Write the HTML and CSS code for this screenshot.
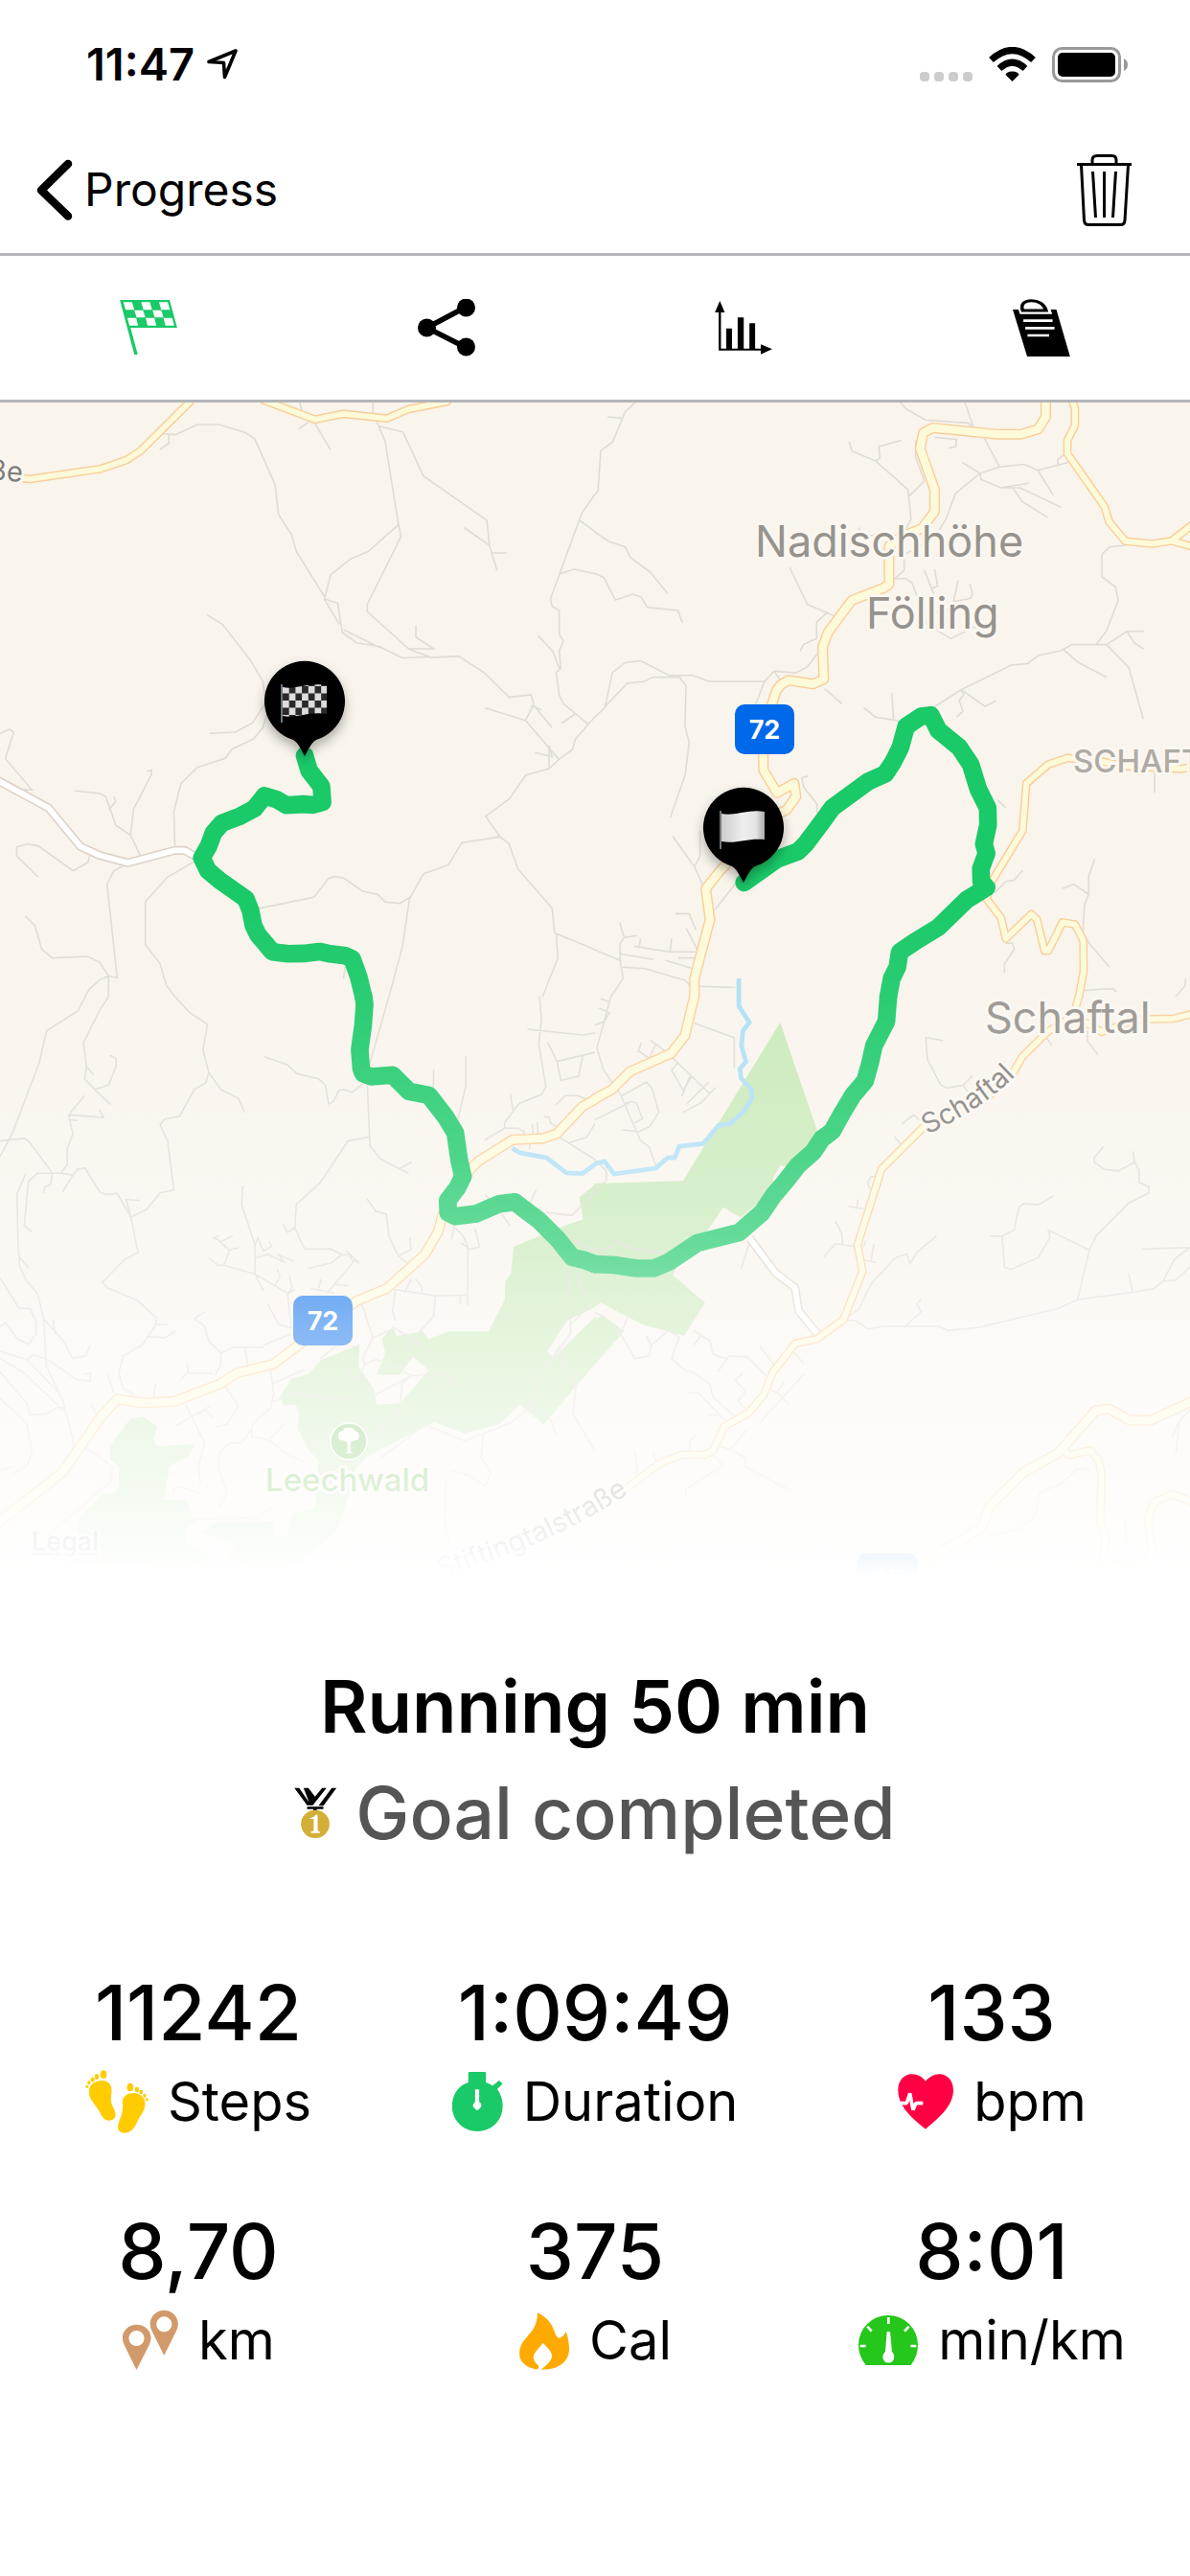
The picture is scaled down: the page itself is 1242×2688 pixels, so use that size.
FILE: index.html
```html
<!DOCTYPE html>
<html lang="en">
<head>
<meta charset="utf-8">
<meta name="viewport" content="width=device-width, initial-scale=1">
<title>Running 50 min</title>
<link rel="stylesheet" href="styles.css">
</head>
<body>
<header>
  <div class="status">
    <div class="status-side">
      <span class="time">11:47</span>
      <svg class="i-loc" viewBox="218 51 34 34" aria-hidden="true"><path d="M221 65.500 L249 54 L237.500 81.500 L236.500 66.500 Z" fill="none" stroke="#000" stroke-width="3.600" stroke-linejoin="round"/></svg>
    </div>
    <div class="status-side right">
      <svg class="i-dots" viewBox="960 49 55 37" aria-hidden="true"><g fill="#ccc"><rect x="960" y="75" width="10" height="10" rx="4"/><rect x="975" y="75" width="10" height="10" rx="4"/><rect x="990" y="75" width="10" height="10" rx="4"/><rect x="1005" y="75" width="10" height="10" rx="4"/></g></svg>
      <svg class="i-wifi" viewBox="1032 49 49 37" aria-hidden="true"><path d="M1056.500 85 L1049.500 78 Q1050.500 74.500 1056.500 74.500 Q1062.500 74.500 1063.500 78 Z"/><path d="M1043 71.500 Q1056.500 59 1070 71.500 M1034.500 62.500 Q1056.500 42.500 1078.500 62.500" fill="none" stroke="#000" stroke-width="7"/></svg>
      <svg class="i-batt" viewBox="1098 49 80 37" aria-hidden="true"><rect x="1099.500" y="50.500" width="69" height="34" rx="9" fill="none" stroke="#999" stroke-width="3"/><rect x="1104" y="55" width="60" height="25" rx="5"/><path d="M1173 61 Q1177 63 1177 67.500 Q1177 72 1173 74 Z" fill="#999"/></svg>
    </div>
  </div>
  <nav class="navbar">
    <a class="back" href="#progress">
      <svg class="i-back" viewBox="38 166 38 64" aria-hidden="true"><path d="M71 171 L43 198.500 L71 225.500" fill="none" stroke="#000" stroke-width="8.500" stroke-linecap="round" stroke-linejoin="round"/></svg>
      <span>Progress</span>
    </a>
    <button class="icon-btn" type="button" aria-label="Delete">
      <svg class="i-trash" viewBox="1125 159 58 77" aria-hidden="true"><g fill="none" stroke="#000" stroke-width="3"><path d="M1125 170.500 H1182"/><path d="M1141 170 V166 Q1141 161.500 1146 161.500 H1161.500 Q1166 161.500 1166 166 V170"/><path d="M1129.500 171 L1132.500 229 Q1133 233.500 1137 233.500 H1170.500 Q1174.500 233.500 1175 229 L1178.500 171"/><path d="M1141.500 178 L1144.500 226 M1153.500 178 V226 M1165.500 178 L1162.500 226"/></g></svg>
    </button>
  </nav>
  <div class="tabs">
    <button class="icon-btn" type="button" aria-label="Summary" aria-current="page">
      <svg class="i-tab" viewBox="125 312 60 60" aria-hidden="true"><g transform="scale(.396 .3333)"><path fill="#1AC968" d="M316 939 H447 L467 1026 H344 L363 1110 H354 Z"/><path fill="#fff" d="M325 946h23l6 24h-23z M372 946h23l6 24h-23z M419 946h23l6 24h-23z M354 971h23l6 23h-23z M402 971h23l6 23h-23z M336 995h23l5 24h-23z M384 995h23l5 24h-23z M431 995h23l5 24h-23z"/></g></svg>
    </button>
    <button class="icon-btn" type="button" aria-label="Share">
      <svg class="i-tab" viewBox="436 312 60 60" aria-hidden="true"><path d="M486 320.500 L445.500 342 L486 362.500" fill="none" stroke="#000" stroke-width="5.500"/><circle cx="445.500" cy="342" r="9.500"/><circle cx="486.500" cy="321" r="9.500"/><circle cx="486.500" cy="362" r="9.500"/></svg>
    </button>
    <button class="icon-btn" type="button" aria-label="Charts">
      <svg class="i-tab" viewBox="746 312 60 60" aria-hidden="true"><g transform="translate(621 0) scale(.396 .3333)"><path d="M326 975h6v116h14v-63h15v63h15v-97h16v97h15v-79h15v79h15v-13l30 15l-30 16v-12H326z M329 942l13 36h-26z"/></g></svg>
    </button>
    <button class="icon-btn" type="button" aria-label="Notes">
      <svg class="i-tab" viewBox="1057 312 60 60" aria-hidden="true"><g transform="translate(621 0) scale(.396 .3333)"><path d="M1101 969h15l4 14h85l-4-14h15l36 147h-113z"/><path d="M1127 972 C1121 950 1134 941 1150 941 C1168 941 1184 952 1189 972 Z" fill="#fff" stroke="#000" stroke-width="9"/><path stroke="#fff" stroke-width="8" d="M1129 1004h77M1134 1027h77M1140 1050h57"/></g></svg>
    </button>
  </div>
</header>

<main>
<svg class="map" viewBox="0 0 1242 1224" role="img" aria-label="Map of the running route">
  <defs>
    <linearGradient id="fade" x1="0" y1="520" x2="0" y2="1224" gradientUnits="userSpaceOnUse">
      <stop offset="0" stop-color="#fff" stop-opacity="0"/>
      <stop offset=".14" stop-color="#fff" stop-opacity=".07"/>
      <stop offset=".37" stop-color="#fff" stop-opacity=".22"/>
      <stop offset=".51" stop-color="#fff" stop-opacity=".34"/>
      <stop offset=".62" stop-color="#fff" stop-opacity=".5"/>
      <stop offset=".73" stop-color="#fff" stop-opacity=".64"/>
      <stop offset=".86" stop-color="#fff" stop-opacity=".78"/>
      <stop offset=".95" stop-color="#fff" stop-opacity=".91"/>
      <stop offset="1" stop-color="#fff"/>
    </linearGradient>
    <linearGradient id="cloth" x1="0" x2="1" y1="0" y2="0"><stop offset="0" stop-color="#ccc"/><stop offset=".5" stop-color="#eee"/><stop offset=".8" stop-color="#e4e4e4"/><stop offset="1" stop-color="#aaa"/></linearGradient>
    <pattern id="checks" width="13.400" height="15" patternUnits="userSpaceOnUse" x="295" y="297"><rect width="14" height="15" fill="#2a2a2a"/><path fill="#ddd" d="M0 0h6.700v7.500H0z M6.700 7.500h6.700V15H6.700z"/></pattern>
    <filter id="shadow" x="-40%" y="-40%" width="180%" height="180%"><feDropShadow dx="0" dy="6" stdDeviation="6" flood-color="#000" flood-opacity=".3"/></filter>

    <!-- the drawing is kept in four tiles that share one unit -->
    <g id="roads">
      <g transform="scale(.396 .3954)">
        <path d="M60 200 L80 202 L265 175 L333 152 L370 128 L505 -6 M690 -8 L830 45 L905 30 L1020 42 L1075 18 L1178 -2 V-10"/>
      </g>
      <g transform="translate(621 0) scale(.396 .3954)">
        <path class="wide" d="M1188 -8 V38 L1168 70 L1122 84 H1060 L890 67 L865 80 L857 122 L895 230 V288 L862 332 L805 355 L775 380 V480 L760 490 L677 522 L615 605 L600 645 L603 730 L575 743 L510 733 L490 745 L478 760 L465 800 L443 900 L444 970 L480 1030 L525 1005 L530 1040 L505 1075 L470 1092 L330 1235 L292 1283 L303 1365 L262 1520 V1572"/>
        <path d="M1255 -12 L1265 15 V60 L1245 100 V135 L1343 275 L1355 315 L1398 366 L1470 373 L1520 365 L1580 318 M1520 365 L1580 382 M1580 960 L1545 967 L1400 960 L1340 948 L1245 938 L1195 955 L1137 1005 L1127 1130 L1045 1265 L1032 1310 L1070 1360 L1083 1415 L1150 1350 L1165 1365 L1185 1447 H1195 L1232 1372 L1265 1377 L1287 1420 L1288 1500 L1275 1572"/>
      </g>
      <g transform="translate(0 620) scale(.396 .3954)">
        <path class="wide" d="M1572 269 L1535 290 L1467 362 L1430 374 L1350 378 L1260 435 L1240 455 L1165 580 L1155 620 L1120 680 L1020 770 L940 803 L720 970 L625 993 L580 1022 L460 1068 L375 1072 L310 1062 L265 1110 L165 1255 L-8 1390"/>
      </g>
      <g transform="translate(621 620) scale(.396 .3954)">
        <path class="wide" d="M262 -2 L237 103 L200 150 L92 198 L45 245 L-3 271 M860 1498 L1020 1400 L1040 1345 L1130 1255 L1220 1205 L1320 1092 L1355 1088 L1410 1118 H1465 L1580 1065"/>
        <path d="M1275 -2 L1262 50 L1190 95 L1125 160 L1100 205 L1030 270 L865 345 L755 455 L692 655 L705 725 L655 852 L585 903 L528 915 L468 992 L445 1050 L405 1098 L340 1135 L312 1197 L290 1209 H228 L168 1233 L20 1345 M1262 50 L1335 93 L1430 60 L1525 58 L1580 44 M1235 1195 L1250 1210 L1305 1197 L1328 1225 L1335 1260 L1332 1385 L1345 1420 L1343 1490 L1400 1510 L1462 1490 L1468 1460 L1457 1380 L1472 1335 L1520 1313 L1580 1335"/>
      </g>
    </g>
    <g id="lanes">
      <g transform="scale(.396 .3954)"><path d="M-8 996 L128 1070 L212 1172 L262 1195 L337 1215 L460 1182 H487 L530 1207"/></g>
      <g transform="translate(621 620) scale(.396 .3954)"><path d="M408 638 L475 728 L527 768 L537 830 L590 895"/></g>
    </g>
    <path id="p-schaftal" d="M968 764 C1008 744 1038 727 1070 692"/>
    <path id="p-stifting" d="M460 1227 C530 1204 600 1180 680 1122"/>
  </defs>

  <rect width="1242" height="1224" fill="#F9F4EC"/>

  <g class="park">
    <g transform="translate(0 620) scale(.396 .3954)">
      <path d="M1570 494 L1527 530 L1537 588 L1500 600 L1353 660 L1347 730 L1332 752 L1330 800 L1288 883 H1183 L1130 904 L1115 884 L1045 895 L1036 870 L1007 903 L1015 940 L993 998 H1053 L1088 950 L1130 986 L1055 1073 L993 1077 L985 1035 L945 975 L948 917 L845 960 L812 997 L768 1007 L737 1057 L748 1078 H780 L788 1095 L785 1140 L812 1195 L838 1222 V1260 L830 1350 L772 1365 L755 1425 H720 V1385 L560 1390 L535 1415 L620 1450 L590 1500 L490 1440 L485 1410 L515 1385 L490 1330 L432 1328 L447 1240 L500 1210 L512 1182 L413 1186 L405 1168 L415 1135 L375 1108 L343 1115 L305 1165 L290 1190 L292 1222 L312 1240 L314 1290 L305 1308 L270 1312 L213 1370 L180 1500 L760 1520 L885 1413 L920 1315 L935 1250 L965 1215 L1145 1122 L1225 1153 L1318 1128 L1370 1075 L1432 1130 L1570 968 V870 L1460 952 L1442 935 L1495 855 L1570 818 Z"/>
      <path d="M1460 952 L1570 843 V900 Z"/>
    </g>
    <g transform="translate(621 620) scale(.396 .3954)">
      <path d="M-2 493 L232 486 L488 68 L587 358 L520 450 L488 446 L468 482 L480 500 L385 583 L338 556 L300 612 L215 715 L205 735 L290 808 L235 895 L125 865 L15 808 L-2 818 Z M-2 853 L20 840 L77 883 L-2 972 Z"/>
    </g>
  </g>

  <g class="paths">
    <g transform="scale(.396 .3954)"><path d="M425 82 L462 85 L520 58 H578 L648 80 L672 97 L725 217 L734 295 L769 350 L781 393 L860 520 L890 530 L902 607 L940 634 L998 643 L1060 674 L1132 671 L1078 651 L968 552 V533 L1057 354 L1050 320 L1015 103 L993 50 M445 84 V108 L421 124 M830 55 L871 125 M787 70 L815 50 M790 0 L795 22 M983 0 V35 M998 62 L1062 78 L1116 194 L1283 311 L1290 377 L1223 330 M1290 377 L1310 444 M1295 397 H1336 M1050 323 L971 393 L925 412 L871 455 L855 520 L895 586 M905 599 L1000 647 M1096 588 V619 L1143 650 H1078 M1132 673 L1209 670 L1276 713 L1342 778 L1399 771 L1407 797 L1385 839 L1473 942 L1447 966 L1386 983 L1342 1046 L1280 1092 L1318 1146 L1342 1165 L1365 1231 L1455 1334 L1462 1400 L1570 1445 M1466 1400 L1470 1467 L1430 1568 M1318 1146 L1217 1162 L1182 1220 L1116 1244 L1082 1305 L1054 1322 L1015 1318 L995 1298 L956 1290 L906 1255 L882 1251 L866 1256 L827 1306 L683 1335 M1080 1305 L1061 1435 L1025 1568 M1278 806 L1385 839 M1407 800 L1455 858 M1400 800 L1428 811 M1410 924 L1455 935 L1447 905 V966 M1568 242 L1533 293 L1475 452 L1451 518 L1455 538 L1474 549 V611 L1485 630 L1474 655 L1478 702 L1466 713 L1474 772 L1485 795 L1550 849 L1568 830 M1418 615 L1458 658 L1474 702 M1527 311 L1570 342 M1475 452 L1513 440 L1570 452 M1516 822 L1481 846 M1550 850 L1516 889 L1509 916 L1473 942 M545 560 L586 585 L660 680 L692 734 L702 790 L665 846 L620 870 L553 873 M705 820 L692 860 L668 888 L610 916 L594 939 L520 963 L477 1006 L458 1080 L461 1170 M0 874 L25 862 L36 870 L14 940 L84 1022 H50 M387 974 L399 970 V982 L352 1073 L344 1142 L370 1196 M198 1025 L264 1032 L279 1041 L305 1115 L344 1142 M287 1074 L305 1053 L300 1040 M100 1252 L44 1197 V1173 L73 1165 L100 1170 L193 1236 L232 1213 L236 1197 M325 1223 L300 1236 L282 1271 L309 1518 L286 1513 L262 1477 L231 1462 L138 1466 L110 1443 L92 1380 L67 1356 M286 1513 L262 1524 L236 1548 L224 1568 M286 1513 V1568 M510 1213 L442 1252 L383 1317 V1431 L422 1481 L438 1537 L461 1568 M910 1490 L905 1521"/></g>
    <g transform="translate(621 0) scale(.396 .3954)"><path d="M106 0 L80 24 L47 103 L15 128 L8 233 L0 243 M33 38 L75 42 M0 342 L35 366 L79 381 L95 411 L145 447 L191 503 M0 451 L23 462 L54 521 L100 506 L121 513 L139 541 L219 549 L230 581 M805 0 L820 17 L871 46 L983 54 L997 64 L975 0 M670 103 L677 128 L739 154 L751 147 L748 116 L807 100 M739 154 L825 230 L833 308 L810 350 M828 247 L868 207 L845 144 V100 M895 92 L952 97 V116 L933 120 M1025 92 L1066 170 L1132 163 L1167 179 L1248 158 M1066 170 L1015 187 L968 158 M1015 187 L950 240 L927 303 L895 358 L818 400 M1015 187 L1017 203 L1070 225 H1120 L1228 276 M1070 225 L1143 213 M1103 228 L1127 262 L1193 303 M1167 179 L1208 245 M1220 165 V150 L1235 138 M513 435 L560 533 L630 563 M613 553 L584 580 V623 L550 638 L541 656 M600 645 L560 697 L530 713 L472 709 L447 736 L423 797 M472 709 L490 735 M447 736 H300 L257 720 H195 L121 682 L80 686 L46 713 L26 805 L0 830 M26 803 L85 741 L131 736 L153 725 H223 L240 748 L237 853 L248 897 L238 982 L198 1096 M605 755 L651 795 M708 805 L739 830 L800 840 M782 766 L787 835 M895 803 L965 758 L1097 693 L1140 689 L1170 667 L1228 655 L1257 639 H1348 L1402 604 H1446 M1402 604 L1422 635 L1446 650 M1348 639 L1407 700 L1445 835 M1235 652 L1274 686 L1348 725 M965 758 L1028 802 L1057 787 M965 762 L972 770 L960 787 L970 815 L953 830 M1322 637 L1348 603 L1379 522 L1372 487 L1336 460 V401 L1356 381 L1398 377 M815 400 V443 L790 465 L818 464 L835 475 L850 515 L875 585 L938 623 L1000 592 L1040 620 M868 443 L895 510 M895 440 L903 485 L890 490 M957 470 L945 525 L990 517 L995 505 L988 478 M875 545 L905 553 L940 545 M695 330 L708 352 L745 350 M545 990 L562 986 M545 990 L550 1015 L585 1060 V1085 M1060 1048 L1083 1070 M1475 975 V1030 M205 1145 L262 1225 L285 1275 M277 1130 V1197 L262 1225 M370 1270 L315 1340 M1317 1205 L1301 1251 V1298 L1290 1325 L1286 1400 L1305 1430 L1356 1490 M1232 1283 L1262 1271 L1301 1298 M1127 1235 L1105 1260 L1083 1264 L1053 1295 M1083 1427 H1100 L1105 1443 L1079 1482 V1505 M65 1372 L77 1412 L66 1428 V1470 L74 1520 L42 1568 M77 1412 L110 1407 M103 1435 L197 1450 H265 M120 1415 L116 1440 M202 1414 L198 1450 M212 1349 H248 L266 1392 M240 1387 L270 1445 M220 1466 H270 M66 1455 L154 1470 M185 1472 L258 1494 M72 1490 L132 1494 L238 1525 L252 1540 L370 1544 M0 1445 L70 1474 M1290 1552 L1340 1548 L1365 1547 L1375 1556 M1557 1520 L1555 1540 L1530 1568"/></g>
    <g transform="translate(0 620) scale(.396 .3954)"><path d="M225 0 L205 38 L123 90 L103 175 L35 355 L0 422 M286 0 L263 35 L220 121 L228 185 L223 217 L250 245 L291 285 M228 185 L247 206 M250 245 L286 233 L306 184 V163 L290 155 M223 261 L181 312 L192 362 L177 403 V443 L160 466 H99 L75 487 L64 604 L85 621 M181 312 L273 319 L262 298 M181 325 L205 327 M0 381 L65 374 L76 382 L138 465 L134 495 L118 503 L114 519 M160 466 L192 471 L165 515 M192 471 L205 456 L224 452 L263 515 L278 522 L309 519 L345 582 L332 535 L369 538 M345 582 L387 561 L422 518 L458 510 L442 381 L422 338 L434 323 L473 316 L512 245 L543 227 L550 200 L535 140 L547 73 L500 42 L461 0 M550 200 L582 245 L629 269 L644 305 M345 582 L364 675 L329 693 L270 754 L282 768 L361 801 L411 847 V866 L374 920 L324 948 L313 994 L325 1035 L355 1050 M411 865 H442 M389 897 L435 900 L462 882 M68 467 L45 520 L47 640 L52 713 L70 750 L99 784 L115 850 L122 975 L165 1065 L192 1165 V1207 L165 1255 M52 688 L76 717 M0 742 L50 822 L79 824 L95 857 V890 L75 917 L46 904 L15 860 L0 870 M115 850 L168 910 L192 955 L225 948 L238 920 M140 853 L145 890 M0 935 L72 959 L88 944 M72 959 L160 1050 M86 944 L130 960 L200 1010 L238 1015 V994 L224 995 M0 955 L60 990 L170 1095 M0 990 L72 1075 L79 1103 H118 L148 1085 L173 1084 M0 1060 L70 1125 L85 1200 L70 1240 L30 1260 M697 159 L758 180 L782 203 L840 217 L858 234 L866 283 L879 277 L893 247 L905 245 L929 252 L960 227 L1025 0 M968 230 L975 393 L1002 428 L1077 467 M975 370 L917 381 L844 491 L781 548 L777 611 L803 666 H870 L905 682 L918 680 L932 700 L862 782 M1050 455 L1085 437 M745 599 L758 622 L777 609 M812 717 L872 703 L900 682 L868 663 M640 499 L637 549 L672 655 V732 L758 783 L768 875 M672 655 L680 638 L694 671 L715 660 L710 645 M672 690 L705 680 L748 700 L735 682 L774 698 M672 732 L695 776 M550 688 L575 709 H590 L672 732 M590 709 L605 670 L575 642 L562 637 L578 630 M605 668 L630 663 M582 647 L613 631 M705 810 L735 865 L770 875 M730 718 L738 740 L722 765 M762 737 L770 765 L760 783 L778 772 M818 770 L882 782 M847 745 L838 775 M882 760 L918 763 M932 695 L947 703 L912 670 M967 533 L990 566 L1018 574 L1026 635 L1050 685 L1073 703 M1050 685 L1083 667 L1080 635 M1228 158 V235 L1205 330 M1143 193 L1142 240 M1422 0 L1427 60 L1420 125 L1439 237 L1427 258 L1368 282 L1330 332 V347 L1278 378 M1330 347 H1365 L1381 355 V375 M1345 256 L1353 305 M1390 86 L1535 101 L1568 96 M1443 120 L1468 171 L1478 221 L1525 210 L1536 156 M1468 171 L1568 147 M1466 285 L1490 261 H1522 L1545 270 M1433 317 L1447 318 L1452 335 L1466 342 M1403 337 L1405 362 M1416 330 L1418 362 M1396 385 V403 M1473 370 L1568 430 M1500 385 L1547 371 L1568 335 M1278 522 L1310 555 L1345 605 M1413 510 L1395 548 M1440 570 L1508 577 L1568 515 M1197 605 L1190 640 M1200 610 L1220 630 L1233 660 V815 M1215 650 L1238 667 L1264 660 L1252 612 M1042 773 L1147 789 L1230 788 M1042 773 L1035 830 L1042 855 M1066 780 L1085 745 M1095 745 L1112 765 V785 M1147 789 L1143 843 L1108 882 L1066 937 M1213 790 V812 M953 810 L983 900 L955 955 L962 970 L992 957 L1085 1000 L1060 1018 L1053 1093 L970 1175 M983 900 L1040 875 L1143 940 M918 982 L938 1015 L962 970 M970 1030 L985 1053 L1085 1000 L1160 993 L1185 1005 L1193 1027 L1155 1037 M713 988 L722 1050 L712 1085 L664 1130 V1162 L710 1170 L747 1130 M720 1020 L803 984 M718 1070 L780 1047 L910 1064 M693 920 L768 890 M582 940 L617 925 H695 M512 850 L540 831 M512 850 L538 868 L550 908 L582 940 V972 L567 1000 M493 967 L497 994 H560 M495 990 L477 1010 M645 925 L653 970 M489 1075 L539 1178 L523 1240 L528 1285 M465 1131 L555 1080 M508 1105 L542 1092 L563 1112 M595 1030 L628 1080 L598 1130 L567 1135 M283 994 L300 1045 M240 1073 L258 1110 M410 1020 L405 1055 M845 955 L905 905 M195 1180 L240 1200 L297 1240 L290 1280 L130 1420 M0 1250 L40 1240 M710 1170 L756 1208 L800 1228 M575 1350 L598 1310 L577 1250 V1205 L605 1178 H635 L664 1140 M461 1313 Q450 1295 475 1295 L530 1310 M500 1380 L680 1375 L725 1340 M1500 715 L1504 887 L1460 952 M1475 920 L1480 968 L1518 1030 L1510 1100 L1568 1200 M1500 870 L1568 800 M1515 720 L1545 790 M1508 640 L1568 672 M1475 920 L1420 1010 L1390 1090 L1437 1097 L1455 1125 L1466 1158 M1120 1130 L1225 1172 L1345 1125 L1390 1090 M1120 1130 L1000 1220 M1275 1150 L1268 1215 L1293 1255 L1280 1293 L1240 1265 L1188 1250 M1175 1278 L1173 1400 L1190 1460"/></g>
    <g transform="translate(621 620) scale(.396 .3954)"><path d="M42 0 L5 135 L22 192 L68 260 L120 380 L143 397 L160 445 M15 5 L40 15 M0 75 L25 65 L38 42 L10 30 M262 70 L367 108 V189 M113 147 L122 122 M113 142 L143 163 L160 125 M146 115 L187 145 L255 210 L303 257 M218 175 L202 194 L233 248 L255 210 M229 262 L250 210 M317 240 L280 280 L232 305 M300 225 L243 282 M68 263 L136 225 L150 242 L168 305 L145 342 L115 357 L72 351 M80 282 Q108 270 113 290 L125 322 L105 333 M0 325 L90 280 M0 430 L30 460 V485 L0 515 M917 116 L872 108 L876 165 L910 231 L926 241 L970 234 L995 209 M970 234 L989 259 M1298 90 V117 L1325 153 M1190 108 L1204 129 M809 336 L840 312 L855 325 M790 370 L805 388 M740 475 H728 L718 490 L725 508 M668 553 L708 560 M693 535 L690 557 M603 687 L633 652 L690 660 M653 655 L650 625 L634 592 M710 694 L740 702 M735 653 L728 696 M713 645 L708 660 M410 640 L385 718 M655 852 L695 825 L728 758 L790 690 L822 679 L830 705 L848 675 L900 632 M668 854 H685 L720 877 L760 870 H905 L932 881 L1010 873 L1220 823 L1272 799 L1418 780 L1472 771 L1497 751 L1527 693 L1568 662 M1497 751 L1531 748 L1568 714 M1443 666 L1568 662 M1406 729 L1418 783 M1272 799 L1303 669 L1321 631 L1406 545 L1460 518 V502 L1434 490 V457 L1422 437 L1418 408 M1422 437 L1379 460 L1343 456 L1316 437 V425 L1340 396 M1042 632 H1073 L1105 616 L1117 557 L1129 546 L1168 549 L1208 526 M1073 632 L1079 713 L1095 720 L1168 689 L1199 635 L1195 616 L1303 669 M815 873 L860 831 L848 812 L860 798 M0 833 L20 843 L68 890 L105 955 L143 948 L148 920 L195 880 L222 900 L202 955 L233 983 L263 994 L303 1022 L311 1057 L367 1107 M68 890 L85 848 M135 895 L148 920 M260 881 L303 908 L311 944 L345 955 L358 948 L402 951 L450 1000 M280 893 L260 920 M350 955 L323 990 M435 923 L475 975 M525 940 L550 967 M390 993 L370 1013 L397 1042 L377 1068 L400 1090 M243 1045 H272 L345 1120 M300 1104 H325 M460 1035 L482 1047 L511 1077 M480 1042 L498 1018 M550 997 L435 1123 M355 1195 L400 1143 M325 1185 L355 1195 L398 1217 L393 1240 L510 1300 M300 1200 L338 1237 L240 1300 V1325 M105 1197 L113 1265 M250 1200 V1175 L265 1155 M153 1203 L160 1225 M0 668 L45 660 L62 645 L85 663 L185 677 M1568 1090 L1540 1120 L1531 1205 M1520 1165 L1540 1120 M1303 1247 H1270 L1230 1283 L1172 1310 L1160 1370 L1125 1402 L1040 1425 M1397 1375 L1400 1470"/></g>
  </g>

  <g class="water">
    <path transform="translate(621 0) scale(.396 .3954)" d="M379 1520 V1572"/>
    <path transform="translate(621 620) scale(.396 .3954)" d="M379 0 V25 L407 68 L390 90 L386 130 L398 172 L382 190 L385 215 L413 245 V270 L390 305 L357 335 L325 340 L285 388 L222 395 L210 425 H192 L160 453 L50 468 L25 435 L-2 441"/>
    <path transform="translate(0 620) scale(.396 .3954)" d="M1570 441 L1535 467 L1493 465 L1440 425 L1370 412 L1350 400"/>
  </g>

  <use href="#lanes" class="lane-edge"/><use href="#lanes" class="lane-fill"/>
  <use href="#roads" class="road-edge"/><use href="#roads" class="road-fill"/>

  <g class="route">
    <path transform="scale(.396 .3954)" d="M803 932 L815 972 L847 1013 L850 1055 L825 1062 L800 1060 L755 1063 L730 1048 L697 1038 L670 1072 L630 1093 L585 1110 L563 1135 L550 1170 L532 1202 L548 1235 L580 1262 L648 1310 L660 1340 L668 1380 L680 1405 L718 1450 L760 1455 L800 1454 L842 1449 L870 1455 L910 1460 L928 1468 L945 1515 L958 1568"/>
    <path transform="translate(0 620) scale(.396 .3954)" d="M958 0 L961 20 L957 75 L948 140 L952 190 L957 203 L978 211 L1035 207 L1078 250 L1130 260 L1175 318 L1200 360 L1210 430 L1220 475 L1205 505 L1180 538 L1181 570 L1200 580 L1255 573 L1315 547 L1357 542 L1380 560 L1420 590 L1470 640 L1508 688 L1540 695 L1568 706"/>
    <path transform="translate(621 620) scale(.396 .3954)" d="M0 706 L50 708 L110 717 H155 L195 700 L270 650 L330 635 L380 622 L440 570 L470 525 L500 490 L535 445 L575 410 L598 375 L625 355 L650 310 L680 260 L712 222 L725 175 L735 130 L768 65 L773 0"/>
    <path transform="translate(621 0) scale(.396 .3954)" d="M393 1267 L480 1205 L535 1185 L555 1165 L600 1105 L625 1070 L720 1000 L765 980 L785 950 L805 910 L820 855 L860 828 L885 825 L905 865 L960 910 L990 955 L1010 1020 L1035 1070 L1036 1115 L1025 1165 L1032 1190 L1017 1230 L1018 1265 L1032 1280 L980 1312 L905 1385 L840 1425 L803 1450 L797 1490 L782 1520 L773 1568"/>
  </g>

  <g class="label">
    <text class="place" x="788" y="161">Nadischhöhe</text>
    <text class="place" x="904" y="236">Fölling</text>
    <text class="place" x="1028" y="658">Schaftal</text>
    <text class="district" x="1120" y="386">SCHAFTAL</text>
    <text class="street" x="23" y="83" text-anchor="end" transform="rotate(5 23 83)">Straße</text>
    <text class="street"><textPath href="#p-schaftal">Schaftal</textPath></text>
    <text class="street"><textPath href="#p-stifting">Stiftingtalstraße</textPath></text>
    <text class="wood" x="277" y="1136">Leechwald</text>
    <text class="legal" x="33" y="1198">Legal</text>
  </g>

  <circle cx="364" cy="1084" r="19" fill="#7CC663" stroke="#fff" stroke-width="1.500"/>
  <path fill="#fff" d="M362.500 1085 L358 1083 Q352 1083 353 1077 Q354 1073 358 1073 Q359 1069 364 1070 Q369 1069 370 1073 Q375 1074 375 1078 Q375 1083 370 1083 L366 1085 V1095 L369 1096.500 H360 L362.500 1095 Z"/>

  <g class="badge">
    <rect x="767" y="315" width="62" height="52" rx="10"/><text x="798" y="351">72</text>
    <rect x="306" y="932" width="62" height="52" rx="10"/><text x="337" y="968">72</text>
    <rect x="894" y="1201" width="64" height="52" rx="10"/><text x="926" y="1237">65</text>
  </g>

  <rect y="520" width="1242" height="704" fill="url(#fade)"/>

  <g transform="translate(0 -1)">
    <g filter="url(#shadow)">
      <path d="M318 370 C314 363 312 357 306 353 A42 42 0 1 1 330 353 C324 357 322 363 318 370 Z"/>
      <path d="M776 502 C772 495 770 489 764 485 A42 42 0 1 1 788 485 C782 489 780 495 776 502 Z"/>
    </g>
    <path d="M294 295 V335" stroke="#667788" stroke-width="2"/>
    <path d="M295 298 C308 301 322 293 341 296 V326 C322 323 310 331 295 328 Z" fill="url(#checks)"/>
    <path d="M752 427 V467" stroke="#777" stroke-width="2"/>
    <path d="M753 430 C768 433 780 425 798 428 V457 C780 455 768 462 753 459 Z" fill="url(#cloth)"/>
  </g>
</svg>

<section class="headline">
  <h1>Running 50 min</h1>
  <p class="goal">
    <svg class="i-medal" viewBox="308 1864 44 54" aria-hidden="true"><g transform="translate(260 1700) scale(.4592 .3333)"><path d="M105 494h11l27 54h-9z M126 494h11l15 27l16-27h10l-31 54h-6z M190 494h11l-30 56h-11z"/><path d="M134 553h37v7h-15v4h-8v-4h-14z"/><ellipse cx="152.500" cy="607" rx="32.500" ry="44" fill="#D4AF37"/><path fill="#fff" d="M141 588 Q150 586 153 578 H158 V625 Q158 631 163 631 V635 H143 V631 Q149 631 149 625 V591 H141 Z"/></g></svg>
    <span>Goal completed</span>
  </p>
</section>

<dl class="stats">
  <div class="stat">
    <dd>11242</dd>
    <dt><svg class="i-steps" viewBox="91 2158 66 68" aria-hidden="true"><g transform="translate(60 2040) scale(.4719 .3333)" fill="#FFCC00"><path d="M74 425 C74 403 87 390 103 390 C119 390 125 406 124 425 C123 445 120 455 128 475 C135 497 135 513 119 515 C106 516 102 500 94 480 C85 460 74 448 74 425 Z"/><ellipse cx="106" cy="371" rx="7" ry="13"/><ellipse cx="91" cy="378" rx="4.500" ry="9"/><ellipse cx="82" cy="387" rx="4.500" ry="7.500"/><ellipse cx="74" cy="397" rx="3.500" ry="6"/><ellipse cx="69.500" cy="409" rx="3" ry="5"/><path d="M148 460 C147 440 158 429 172 429 C188 430 199 444 198 465 C197 487 188 497 181 518 C173 542 165 555 151 554 C138 552 135 538 140 520 C146 500 150 485 148 460 Z"/><ellipse cx="165" cy="411" rx="7" ry="13"/><ellipse cx="180" cy="418" rx="4.500" ry="8.500"/><ellipse cx="189" cy="426" rx="4" ry="7"/><ellipse cx="197" cy="437" rx="3.500" ry="6"/><ellipse cx="202" cy="449" rx="3" ry="5"/></g></svg>Steps</dt>
  </div>
  <div class="stat">
    <dd>1:09:49</dd>
    <dt><svg class="i-watch" viewBox="475 2158 54 68" aria-hidden="true"><g transform="translate(60 2040) scale(.4719 .3333)"><path fill="#1AC968" d="M915 366 Q915 363 918 363 H951 Q954 363 954 366 V396 Q962 400 969 406 L983 390 L991 400 L979 417 Q991 440 991 470 C991 515 966 549 935 549 C904 549 879 515 879 470 C879 435 893 405 915 396 Z"/><path fill="#fff" d="M930 418 H939 V457 Q944 461 944 469 Q944 474 940 477 Q938 483 934 483 Q931 483 930 478 Q925 474 925 469 Q926 461 930 457 Z"/></g></svg>Duration</dt>
  </div>
  <div class="stat">
    <dd>133</dd>
    <dt><svg class="i-heart" viewBox="938 2158 60 68" aria-hidden="true"><g transform="translate(800 2040) scale(.3333)"><path fill="#FF0044" d="M504 392 C515 380 530 370 547 370 C572 370 591 390 591 420 C591 465 555 500 504 542 C450 500 418 465 418 420 C418 390 437 370 461 370 C480 370 493 379 504 392 Z"/><path fill="none" stroke="#fff" stroke-width="11" stroke-linejoin="bevel" d="M424 461 H445 L455 430 L465 482 L474 461 H496"/></g></svg>bpm</dt>
  </div>
  <div class="stat">
    <dd>8,70</dd>
    <dt><svg class="i-pins" viewBox="129 2409 60 64" aria-hidden="true"><g transform="translate(60 2290) scale(.4719 .3333)" fill="#D29A6A" fill-rule="evenodd"><path d="M179 546 L152 468 Q148 457 148 445 C148 422 162 404 179 404 C197 404 211 422 211 445 Q211 457 207 468 Z M179 423 A17 24 0 1 0 179.100 423 Z"/><path d="M240 501 L213 424 Q209 413 209 402 C209 378 223 359 240 359 C257 359 271 378 271 402 Q271 413 267 424 Z M240 379 A17 24 0 1 0 240.100 379 Z"/></g></svg>km</dt>
  </div>
  <div class="stat">
    <dd>375</dd>
    <dt><svg class="i-fire" viewBox="544 2409 54 64" aria-hidden="true"><g transform="translate(60 2290) scale(.4719 .3333)"><path fill="#FFAA00" d="M1068 367 C1095 385 1102 410 1108 436 Q1113 449 1119 445 Q1128 438 1131 426 C1135 440 1138 460 1138 480 C1138 520 1115 546 1076 545 C1090 530 1100 515 1100 502 C1099 485 1089 476 1080 461 C1072 478 1059 490 1059 508 C1060 520 1066 528 1071 533 L1068 545 C1040 538 1028 518 1028 495 C1028 460 1046 445 1059 417 Q1068 395 1068 367 Z"/></g></svg>Cal</dt>
  </div>
  <div class="stat">
    <dd>8:01</dd>
    <dt><svg class="i-gauge" viewBox="899 2409 64 64" aria-hidden="true"><g transform="translate(800 2040) scale(.3333)"><path fill="#25C71A" d="M323 1281 Q300 1252 300 1218 A93 93 0 0 1 486 1218 Q486 1252 464 1281 Z"/><path stroke="#fff" stroke-width="8" d="M394 1131 V1152 M305 1221 H323 M463 1221 H481 M328 1160 L341 1175 M458 1160 L444 1175"/><path fill="#fff" d="M389 1176 H399 L405 1238 Q412 1246 412 1256 Q410 1274 394 1274 Q378 1274 376 1256 Q376 1246 384 1238 Z"/></g></svg>min/km</dt>
  </div>
</dl>
</main>
</body>
</html>
```
FILE: styles.css
```css
* { box-sizing: border-box; }

body {
  margin: 0;
  background: #fff;
  color: #000;
  font-family: Inter, "Liberation Sans", sans-serif;
}

svg { display: block; flex: none; }

.status {
  display: flex;
  justify-content: space-between;
  height: 134px;
  padding: 0 64px 0 90px;
}
.status-side { display: flex; align-items: center; gap: 12px; }
.status-side.right { gap: 17px; }
.time { font-size: 47px; font-weight: 600; line-height: 56px; }

.navbar {
  display: flex;
  align-items: center;
  justify-content: space-between;
  height: 133px;
  padding: 0 60px 2px 38px;
  border-bottom: 3px solid #b3b5b8;
}
.back {
  display: flex;
  align-items: center;
  gap: 12px;
  color: inherit;
  font-size: 48px;
  line-height: 60px;
  text-decoration: none;
}
.icon-btn {
  display: flex;
  align-items: center;
  justify-content: center;
  margin: 0;
  padding: 0;
  border: 0;
  background: none;
}
.tabs {
  display: grid;
  grid-template-columns: repeat(4, 1fr);
  height: 153px;
  border-bottom: 3px solid #b3b5b8;
}

.i-loc { width: 34px; height: 34px; }
.i-dots { width: 55px; height: 37px; }
.i-wifi { width: 49px; height: 37px; }
.i-batt { width: 80px; height: 37px; }
.i-back { width: 38px; height: 64px; }
.i-trash { width: 58px; height: 77px; }
.i-tab { width: 60px; height: 60px; }
.i-medal { width: 44px; height: 54px; }
.i-steps { width: 66px; height: 68px; }
.i-watch { width: 54px; height: 68px; }
.i-heart { width: 60px; height: 68px; }
.i-pins { width: 60px; height: 64px; }
.i-fire { width: 54px; height: 64px; }
.i-gauge { width: 64px; height: 64px; }

/* map */
.map { width: 100%; height: auto; }
.park { fill: #c9e9b8; }
.paths { fill: none; stroke: #dfdcd5; stroke-width: 4; }
.water { fill: none; stroke: #aedff5; stroke-width: 12; }
.lane-edge, .lane-fill, .road-edge, .road-fill { fill: none; stroke-linejoin: round; }
.lane-edge { stroke: #ddd2c6; stroke-width: 23; }
.lane-fill { stroke: #fff; stroke-width: 15; }
.road-edge { stroke: #f8cd96; stroke-width: 22; --wide: 28; }
.road-fill { stroke: #fdfada; stroke-width: 15; --wide: 21; }
.wide { stroke-width: var(--wide); }
.route {
  fill: none;
  stroke: #1ac968;
  stroke-width: 47;
  stroke-linecap: round;
  stroke-linejoin: round;
}
.label text {
  stroke: #fbf7f0;
  stroke-width: 6;
  stroke-linejoin: round;
  paint-order: stroke;
}
.label .place { fill: #96938d; font-size: 45px; }
.label .district { fill: #aeaba5; font-size: 33px; font-weight: 500; }
.label .street { fill: #7f7d79; font-size: 29px; }
.label .wood { fill: #63bb43; font-size: 33px; font-weight: 500; }
.label .legal { fill: #8a8a8a; font-size: 27px; font-weight: 500; text-decoration: underline; }
.badge rect { fill: #0069ea; }
.badge text { fill: #fff; font-size: 27px; font-weight: 700; text-anchor: middle; }

/* summary */
.headline {
  display: flex;
  flex-direction: column;
  align-items: center;
  padding-top: 80px;
}
h1, .goal {
  margin: 0;
  font-size: 76px;
  line-height: 112px;
}
h1 { font-weight: 600; }
.goal {
  display: flex;
  align-items: center;
  gap: 20px;
  color: #555;
  font-size: 75px;
  font-weight: 500;
}

.stats {
  display: grid;
  grid-template-columns: repeat(3, 1fr);
  row-gap: 63px;
  margin: 104px 0 0;
}
.stat { display: flex; flex-direction: column; align-items: center; }
.stat dd {
  margin: 0;
  font-size: 80px;
  font-weight: 500;
  line-height: 96px;
}
.stat dt {
  display: flex;
  align-items: center;
  gap: 20px;
  height: 90px;
  font-size: 56px;
  line-height: 72px;
}
```
